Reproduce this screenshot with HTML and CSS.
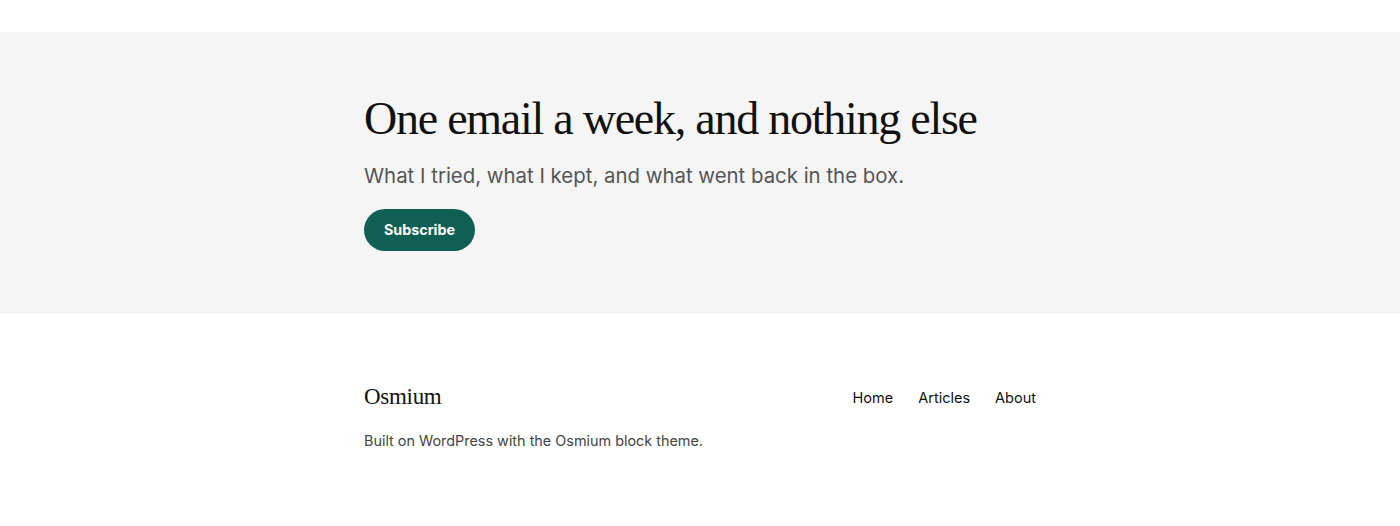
FILE: index.html
```html
<!DOCTYPE html>
<html lang="en">
<head>
    <meta charset="UTF-8">
    <meta name="viewport" content="width=device-width, initial-scale=1.0">
    <title>Osmium</title>
    <link rel="stylesheet" href="styles.css">
</head>
<body>
<div class="top-gap"></div>
<section class="hero">
    <div class="wrap">
        <h1 class="hero-title">One email a week, and nothing else</h1>
        <p class="hero-lead">What I tried, what I kept, and what went back in the box.</p>
        <a class="btn" href="#">Subscribe</a>
    </div>
</section>
<footer class="site-footer">
    <div class="wrap">
        <div class="footer-row">
            <div class="site-title">Osmium</div>
            <nav class="footer-nav">
                <a href="#">Home</a>
                <a href="#">Articles</a>
                <a href="#">About</a>
            </nav>
        </div>
        <p class="credit">Built on WordPress with the Osmium block theme.</p>
    </div>
</footer>
</body>
</html>
```

FILE: styles.css
```css
body {
    margin: 0;
    padding: 0;
    background-color: #fff;
    color: #111;
    font-family: "Inter", "Liberation Sans", sans-serif;
}

.top-gap {
    height: 32px;
}

.wrap {
    width: 672px;
    margin: 0 auto;
}

.hero {
    background-color: #f5f5f5;
    height: 282px;
    box-sizing: border-box;
    padding-top: 64px;
}

.hero-title {
    font-family: "Liberation Serif", serif;
    font-weight: 400;
    font-size: 46px;
    letter-spacing: -1.25px;
    line-height: 1;
    margin: 0;
    color: #111;
}

.hero-lead {
    font-size: 20.4px;
    color: #555;
    margin: 22px 0 0;
    line-height: 1.2;
}

.btn {
    display: inline-block;
    margin-top: 21px;
    background-color: #0f5f53;
    color: #fff;
    text-decoration: none;
    font-weight: 700;
    font-size: 14.3px;
    padding: 0 20px;
    height: 42px;
    line-height: 42px;
    border-radius: 21px;
}

.site-footer {
    padding-top: 70px;
}

.footer-row {
    display: flex;
    justify-content: space-between;
    align-items: center;
}

.site-title {
    font-family: "Liberation Serif", serif;
    font-size: 23px;
    letter-spacing: -0.3px;
}

.footer-nav {
    display: flex;
    gap: 25px;
}

.footer-nav a {
    color: #111;
    text-decoration: none;
    font-size: 14.5px;
}

.credit {
    margin: 22px 0 0;
    font-size: 14.4px;
    color: #444;
}
```
